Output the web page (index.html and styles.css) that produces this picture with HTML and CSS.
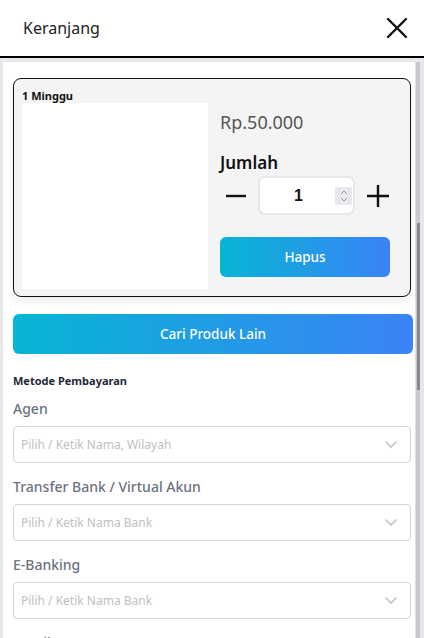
FILE: index.html
```html
<!DOCTYPE html>
<html lang="id">
<head>
<meta charset="utf-8">
<title>Keranjang</title>
<link rel="stylesheet" href="styles.css">
</head>
<body>
<div class="app">
  <header class="header">
    <h1 class="title">Keranjang</h1>
    <button class="close" aria-label="Tutup">
      <svg width="22" height="22" viewBox="0 0 22 22"><path d="M2 2 L20 20 M20 2 L2 20" stroke="#111" stroke-width="2.4" stroke-linecap="round" fill="none"/></svg>
    </button>
  </header>
  <div class="body">
    <main class="panel">
      <section class="card">
        <div class="card-left">
          <div class="period">1 Minggu</div>
          <div class="thumb"></div>
        </div>
        <div class="card-right">
          <div class="price">Rp.50.000</div>
          <div class="qty-label">Jumlah</div>
          <div class="qty-row">
            <svg class="qbtn" width="22" height="22" viewBox="0 0 22 22"><path d="M1 11 H21" stroke="#111" stroke-width="2.4"/></svg>
            <div class="qty-input">
              <span class="qty-val">1</span>
              <span class="spin">
                <svg width="10" height="16" viewBox="0 0 10 16"><path d="M2 6 L5 3 L8 6 M2 10 L5 13 L8 10" stroke="#9a9a9a" stroke-width="1" fill="none"/></svg>
              </span>
            </div>
            <svg class="qbtn" width="24" height="24" viewBox="0 0 24 24"><path d="M1 12 H23 M12 1 V23" stroke="#111" stroke-width="2.4"/></svg>
          </div>
          <button class="btn btn-small">Hapus</button>
        </div>
      </section>
      <button class="btn btn-wide">Cari Produk Lain</button>
      <div class="section-title">Metode Pembayaran</div>
      <div class="field field-first">
        <label class="field-label">Agen</label>
        <div class="select"><span>Pilih / Ketik Nama, Wilayah</span><svg width="14" height="9" viewBox="0 0 14 9"><path d="M1.5 1.5 L7 7 L12.5 1.5" stroke="#c4c4c4" stroke-width="1.6" fill="none"/></svg></div>
      </div>
      <div class="field">
        <label class="field-label">Transfer Bank / Virtual Akun</label>
        <div class="select"><span>Pilih / Ketik Nama Bank</span><svg width="14" height="9" viewBox="0 0 14 9"><path d="M1.5 1.5 L7 7 L12.5 1.5" stroke="#c4c4c4" stroke-width="1.6" fill="none"/></svg></div>
      </div>
      <div class="field">
        <label class="field-label">E-Banking</label>
        <div class="select"><span>Pilih / Ketik Nama Bank</span><svg width="14" height="9" viewBox="0 0 14 9"><path d="M1.5 1.5 L7 7 L12.5 1.5" stroke="#c4c4c4" stroke-width="1.6" fill="none"/></svg></div>
      </div>
      <div class="field">
        <label class="field-label">Retail</label>
      </div>
    </main>
    <div class="scrollbar"><div class="thumb-bar"></div></div>
  </div>
</div>
</body>
</html>
```
FILE: styles.css
```css
* { box-sizing: border-box; }
html, body { margin: 0; padding: 0; }
body {
  width: 424px;
  height: 638px;
  overflow: hidden;
  background: #e6e7eb;
  font-family: "Noto Sans", "Open Sans", sans-serif;
  color: #111;
}
.app { display: flex; flex-direction: column; height: 638px; }
.header {
  height: 58px;
  background: #fff;
  border-bottom: 2px solid #000;
  display: flex;
  align-items: center;
  justify-content: space-between;
  padding: 0 16px 0 23px;
  flex: none;
}
.title { margin: 0; font-size: 16px; font-weight: 400; color: #222; }
.close { background: none; border: 0; padding: 0; width: 22px; height: 22px; display: flex; }
.body {
  flex: 1;
  display: flex;
  padding: 4px 4px 0 3px;
  min-height: 0;
}
.panel {
  flex: 1;
  background: #fff;
  padding: 16px 5px 0 10px;
  overflow: hidden;
}
.scrollbar {
  width: 5px;
  background: #c9c9c9;
  border-left: 1px solid #e0e0e0;
  display: flex;
  flex-direction: column;
  padding-top: 161px;
}
.thumb-bar { height: 167px; background: #8a8a8a; width: 3px; margin-left: 1px; }
.card {
  border: 1px solid #111;
  border-radius: 8px;
  background: #f4f4f4;
  box-shadow: 0 6px 10px rgba(0,0,0,0.06);
  display: flex;
  padding: 9px 20px 7px 8px;
  gap: 12px;
  width: 398px;
}
.card-left { display: flex; flex-direction: column; }
.period { font-size: 11px; font-weight: 700; line-height: 15px; color: #111; }
.thumb { width: 186px; height: 186px; background: #fff; }
.card-right { flex: 1; display: flex; flex-direction: column; padding-top: 22px; }
.price { font-size: 18px; color: #555; line-height: 24px; }
.qty-label { font-size: 17px; font-weight: 600; margin-top: 18px; line-height: 22px; color: #111; }
.qty-row { display: flex; align-items: center; gap: 11px; margin-top: 2px; padding-left: 5px; }
.qbtn { flex: none; }
.qty-input {
  width: 97px;
  height: 39px;
  border: 2px solid #e5e7eb;
  border-radius: 7px;
  background: #fff;
  display: flex;
  align-items: center;
  justify-content: flex-end;
  position: relative;
}
.qty-val {
  position: absolute;
  left: 0; right: 16px;
  text-align: center;
  font-family: "Liberation Sans", Arial, sans-serif;
  font-weight: 700;
  font-size: 16px;
}
.spin { width: 17px; height: 18px; background: #e8e8ec; display: flex; align-items: center; justify-content: center; margin-right: 1px; }
.btn {
  border: 0;
  border-radius: 6px;
  background: linear-gradient(90deg, #06b6d4, #3b82f6);
  color: #fff;
  font-family: "Noto Sans", "Open Sans", sans-serif;
  font-size: 13.5px;
  font-weight: 500;
  height: 40px;
}
.btn-small { width: 170px; margin-top: 22px; }
.btn-wide { width: 400px; display: block; margin-top: 17px; }
.section-title { font-size: 11px; font-weight: 700; margin-top: 19px; line-height: 16px; color: #1f2937; }
.field { display: flex; flex-direction: column; }
.field-label { font-size: 14px; color: #6b7280; font-weight: 500; line-height: 20px; margin-top: 14px; margin-bottom: 7px; }
.field-first .field-label { margin-top: 10px; }
.select {
  width: 398px;
  height: 37px;
  border: 1px solid #d1d5db;
  border-radius: 4px;
  display: flex;
  align-items: center;
  justify-content: space-between;
  padding: 0 12px 0 7px;
  font-size: 12px;
  color: #c0c0c0;
  background: #fff;
}
```
